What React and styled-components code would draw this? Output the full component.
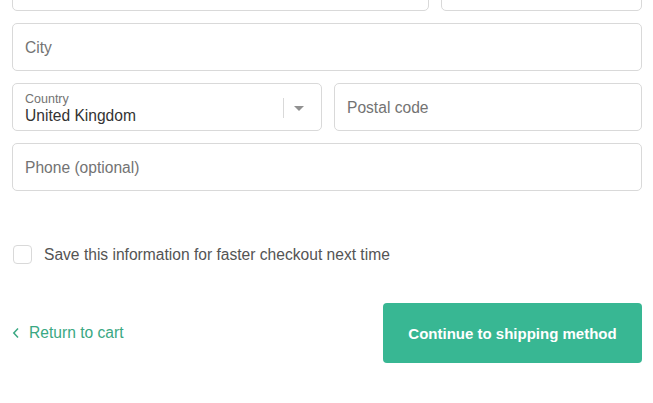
import React from 'react';
import styled, { createGlobalStyle } from 'styled-components';

const GlobalStyle = createGlobalStyle`
  html, body {
    margin: 0;
    padding: 0;
    background: #ffffff;
    overflow: hidden;
  }
  body {
    font-family: "Helvetica Neue", "Liberation Sans", Arial, sans-serif;
    -webkit-font-smoothing: antialiased;
  }
`;

const Page = styled.div`
  width: 653px;
  height: 403px;
  overflow: hidden;
`;

const Form = styled.div`
  margin-top: -37px;
  padding: 0 11px 0 12px;
  display: flex;
  flex-direction: column;
  gap: 12px;
`;

const Row = styled.div`
  display: grid;
  grid-template-columns: ${(p) => p.cols || '1fr'};
  gap: 12px;
`;

const Field = styled.div`
  position: relative;
  height: 48px;
  box-sizing: border-box;
  border: 1px solid #d9d9d9;
  border-radius: 5px;
  background: #fff;
  display: flex;
  align-items: center;
  padding: 2px 12px 0;
  font-size: 15.6px;
  color: #737373;
`;

const SelectField = styled(Field)`
  flex-direction: column;
  align-items: flex-start;
  justify-content: center;
  padding-right: 48px;
`;

const FloatLabel = styled.span`
  font-size: 12.5px;
  color: #737373;
  line-height: 14px;
`;

const Value = styled.span`
  font-size: 15.6px;
  color: #333;
  line-height: 19px;
`;

const Divider = styled.span`
  position: absolute;
  right: 37px;
  top: 14px;
  width: 1px;
  height: 20px;
  background: #d9d9d9;
`;

const Caret = styled.span`
  position: absolute;
  right: 17px;
  top: 22px;
  width: 0;
  height: 0;
  border-left: 5px solid transparent;
  border-right: 5px solid transparent;
  border-top: 5px solid #919191;
`;

const CheckRow = styled.label`
  display: flex;
  align-items: center;
  gap: 12px;
  margin-top: 42px;
  padding-left: 1px;
  font-size: 15.6px;
  color: #545454;
`;

const Box = styled.span`
  width: 19px;
  height: 19px;
  box-sizing: border-box;
  border: 1px solid #d9d9d9;
  border-radius: 4px;
  background: #fff;
`;

const Actions = styled.div`
  display: flex;
  justify-content: space-between;
  align-items: center;
  margin-top: 27px;
`;

const BackLink = styled.a`
  display: flex;
  align-items: center;
  gap: 9px;
  color: #3aa883;
  font-size: 15.6px;
  text-decoration: none;
`;

const Button = styled.button`
  width: 259px;
  height: 60px;
  border: none;
  border-radius: 4px;
  background: #38b793;
  color: #fff;
  font-family: inherit;
  font-size: 15px;
  font-weight: 700;
  cursor: pointer;
`;

export default function App() {
  return (
    <Page>
      <GlobalStyle />
      <Form>
        <Row cols="417px 1fr">
          <Field />
          <Field />
        </Row>
        <Row>
          <Field>City</Field>
        </Row>
        <Row cols="310px 1fr">
          <SelectField>
            <FloatLabel>Country</FloatLabel>
            <Value>United Kingdom</Value>
            <Divider />
            <Caret />
          </SelectField>
          <Field>Postal code</Field>
        </Row>
        <Row>
          <Field>Phone (optional)</Field>
        </Row>
        <CheckRow>
          <Box />
          Save this information for faster checkout next time
        </CheckRow>
        <Actions>
          <BackLink href="#">
            <svg width="8" height="12" viewBox="0 0 8 12" fill="none">
              <path d="M6 1.5L1.8 6 6 10.5" stroke="#3aa883" strokeWidth="1.5" />
            </svg>
            Return to cart
          </BackLink>
          <Button>Continue to shipping method</Button>
        </Actions>
      </Form>
    </Page>
  );
}
